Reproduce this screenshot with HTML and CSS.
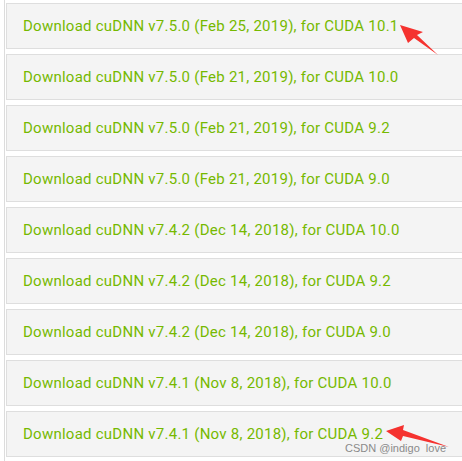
FILE: index.html
```html
<!DOCTYPE html>
<html lang="en">
<head>
  <meta charset="UTF-8">
  <meta name="viewport" content="width=device-width, initial-scale=1.0">
  <title>cuDNN Archive</title>
  <link rel="stylesheet" href="styles.css">
</head>
<body>
  <div class="archive">
    <a class="download-row" href="#">Download cuDNN v7.5.0 (Feb 25, 2019), for CUDA 10.1</a>
    <a class="download-row" href="#">Download cuDNN v7.5.0 (Feb 21, 2019), for CUDA 10.0</a>
    <a class="download-row" href="#">Download cuDNN v7.5.0 (Feb 21, 2019), for CUDA 9.2</a>
    <a class="download-row" href="#">Download cuDNN v7.5.0 (Feb 21, 2019), for CUDA 9.0</a>
    <a class="download-row" href="#">Download cuDNN v7.4.2 (Dec 14, 2018), for CUDA 10.0</a>
    <a class="download-row" href="#">Download cuDNN v7.4.2 (Dec 14, 2018), for CUDA 9.2</a>
    <a class="download-row" href="#">Download cuDNN v7.4.2 (Dec 14, 2018), for CUDA 9.0</a>
    <a class="download-row" href="#">Download cuDNN v7.4.1 (Nov 8, 2018), for CUDA 10.0</a>
    <a class="download-row" href="#">Download cuDNN v7.4.1 (Nov 8, 2018), for CUDA 9.2</a>
  </div>

  <div class="watermark">CSDN @indigo&nbsp;&nbsp;love</div>

  <svg class="annotation" width="462" height="461" viewBox="0 0 462 461">
    <!-- arrow pointing at 10.1 -->
    <polygon fill="#f5322f" points="400,25 423,32 417,35 438,55 414,38 408,43"/>
    <!-- arrow pointing at 9.2 -->
    <polygon fill="#f5322f" points="386,431 404,425 403,430 449,447 403,436 401,441"/>
  </svg>
</body>
</html>
```

FILE: styles.css
```css
body {
  margin: 0;
  background: #fff;
  font-family: Roboto, "Liberation Sans", sans-serif;
  position: relative;
  width: 462px;
  height: 461px;
  overflow: hidden;
}
.archive {
  margin-left: 4px;
  padding-top: 3px;
  padding-left: 1px;
  border-left: 1px solid #dcdcdc;
  height: 458px;
}
.download-row {
  display: flex;
  align-items: center;
  box-sizing: border-box;
  height: 46px;
  margin-bottom: 5px;
  padding-left: 16px;
  background: #f4f4f4;
  border: 1px solid #dedede;
  border-right: none;
  color: #76b900;
  font-size: 15px;
  letter-spacing: 0.25px;
  text-decoration: none;
  white-space: nowrap;
}
.watermark {
  position: absolute;
  left: 345px;
  top: 442px;
  font-family: "Liberation Sans", Arial, sans-serif;
  font-size: 11px;
  color: #8a8a8a;
}
.annotation {
  position: absolute;
  left: 0;
  top: 0;
}
```
